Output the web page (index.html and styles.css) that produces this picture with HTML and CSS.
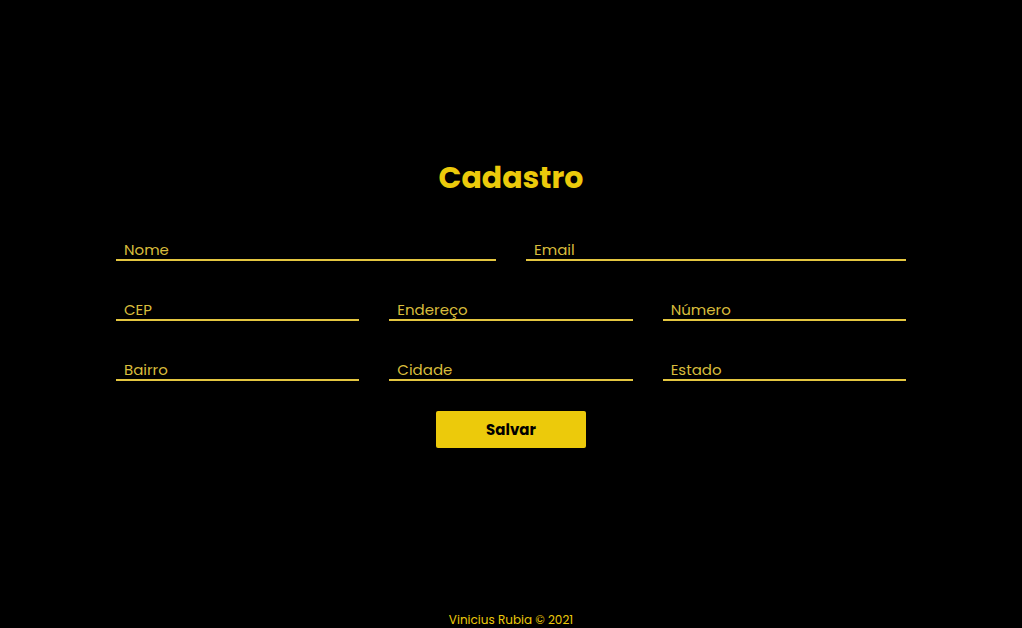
FILE: index.html
```html
<!DOCTYPE html>
<html lang="pt-BR">
<head>
<meta charset="utf-8">
<title>Cadastro</title>
<link rel="stylesheet" href="styles.css">
</head>
<body>
<main class="page">
  <h1 class="title">Cadastro</h1>
  <form class="form">
    <div class="row row-2">
      <input class="field" type="text" placeholder="Nome">
      <input class="field" type="email" placeholder="Email">
    </div>
    <div class="row row-3">
      <input class="field" type="text" placeholder="CEP">
      <input class="field" type="text" placeholder="Endereço">
      <input class="field" type="text" placeholder="Número">
    </div>
    <div class="row row-3">
      <input class="field" type="text" placeholder="Bairro">
      <input class="field" type="text" placeholder="Cidade">
      <input class="field" type="text" placeholder="Estado">
    </div>
    <div class="actions">
      <button class="btn" type="button">Salvar</button>
    </div>
  </form>
</main>
<footer class="footer">Vinicius Rubia © 2021</footer>
</body>
</html>
```
FILE: styles.css
```css
* { box-sizing: border-box; }
html, body { height: 100%; }
body {
  margin: 0;
  background: #000;
  color: #ecca0b;
  font-family: "Poppins", "Open Sans", "DejaVu Sans", sans-serif;
  display: flex;
  flex-direction: column;
}
.page {
  flex: 1;
  padding-top: 158px;
}
.title {
  margin: 0 0 39px;
  text-align: center;
  font-size: 30px;
  line-height: 40px;
  font-weight: 700;
  color: #ecca0b;
}
.form {
  width: 790px;
  margin: 0 auto;
  display: flex;
  flex-direction: column;
  gap: 36px;
}
.row {
  display: grid;
  gap: 30px;
}
.row-2 { grid-template-columns: 1fr 1fr; }
.row-3 { grid-template-columns: 1fr 1fr 1fr; }
.field {
  display: block;
  width: 100%;
  height: 24px;
  padding: 3px 8px 0;
  background: transparent;
  border: none;
  border-bottom: 2px solid #e4c640;
  color: #ecca0b;
  font-family: inherit;
  font-size: 15px;
  outline: none;
}
.field::placeholder { color: #d8bd3c; opacity: 1; }
.actions {
  display: flex;
  justify-content: center;
  margin-top: -6px;
}
.btn {
  width: 150px;
  height: 37px;
  border: none;
  border-radius: 2px;
  background: #ecca0b;
  color: #000;
  font-family: inherit;
  font-size: 15px;
  font-weight: 700;
  padding: 0;
}
.footer {
  text-align: center;
  font-size: 12px;
  line-height: 14px;
  padding-bottom: 1px;
  color: #ecca0b;
}
```
